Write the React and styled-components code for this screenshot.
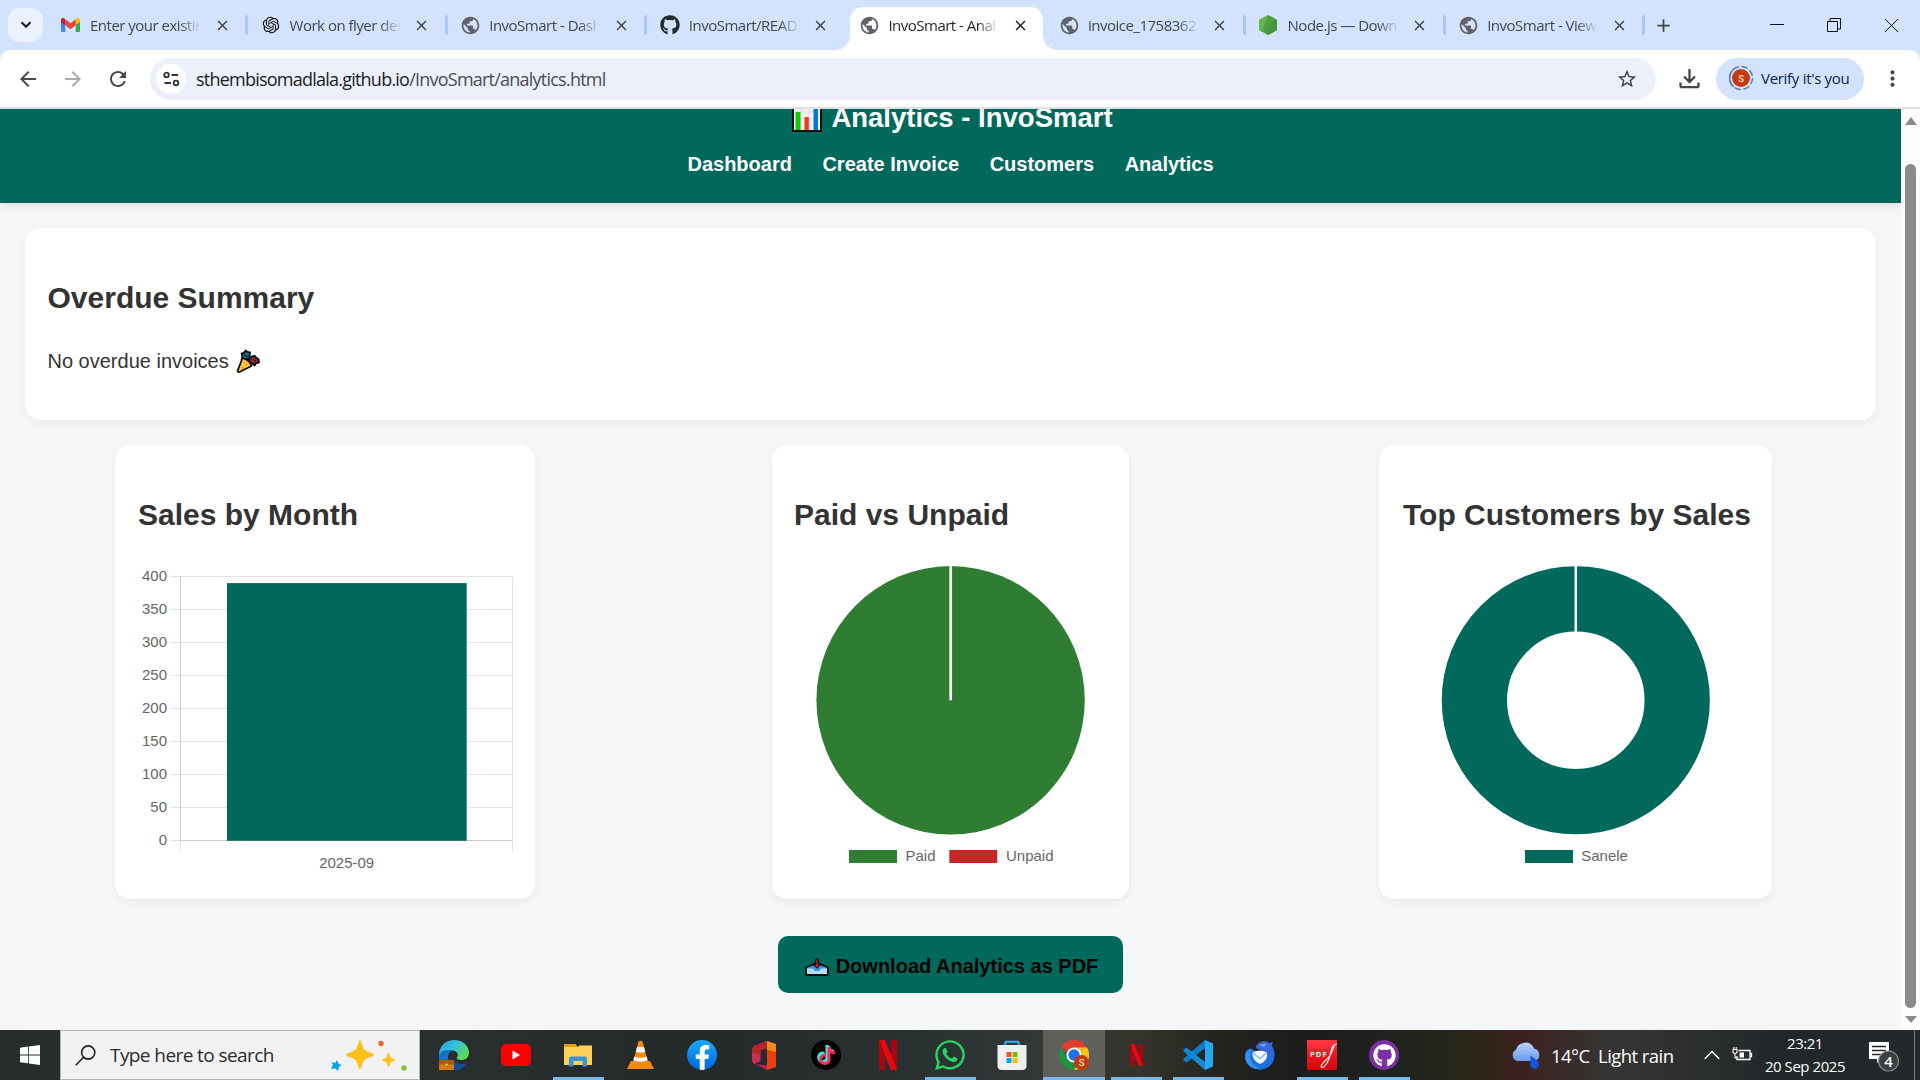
import React from "react";
import styled, { createGlobalStyle, css } from "styled-components";
import { FaGithub, FaFacebookF, FaTiktok, FaWhatsapp } from "react-icons/fa";
import { RiOpenaiFill } from "react-icons/ri";
import {
  MdPublic,
  MdClose,
  MdArrowBack,
  MdArrowForward,
  MdRefresh,
  MdStarOutline,
  MdMoreVert,
  MdAdd,
} from "react-icons/md";

const TEAL = "#00695c";

const GlobalStyle = createGlobalStyle`
  * { box-sizing: border-box; }
  body { margin: 0; overflow: hidden; background: #f4f6f8; }
  svg { display: block; flex: none; }
`;

const Screen = styled.div`
  width: 1920px;
  height: 1080px;
  display: flex;
  flex-direction: column;
  overflow: hidden;
  font-family: "Open Sans", "Noto Sans", sans-serif;
`;

/* ---------- Browser tab strip ---------- */

const TabStrip = styled.div`
  height: 50px;
  display: flex;
  background: #d3e2fd;
  flex: none;
`;

const TabSearch = styled.div`
  width: 35px;
  height: 34px;
  margin: 8px 0 0 8px;
  border-radius: 12px;
  background: #ebf1fd;
  display: grid;
  place-items: center;
`;

const Tabs = styled.div`
  display: flex;
  margin-left: 7px;
`;

const Tab = styled.div`
  position: relative;
  width: 199.6px;
  height: 50px;
  padding-left: 11px;
  display: flex;
  align-items: center;
  color: ${(p) => (p.$active ? "#1f2124" : "#43474d")};
  & > * {
    flex: none;
  }
  ${(p) =>
    p.$active &&
    css`
      &::before {
        content: "";
        position: absolute;
        left: 1.6px;
        top: 7px;
        width: 193px;
        height: 43px;
        background: #fff;
        border-radius: 13px 13px 0 0;
      }
      &::after {
        content: "";
        position: absolute;
        left: -12.4px;
        bottom: 0;
        width: 221px;
        height: 14px;
        background: radial-gradient(circle at 0 0, transparent 13.5px, #fff 14px) 0 0 / 14px 14px no-repeat,
          radial-gradient(circle at 14px 0, transparent 13.5px, #fff 14px) 100% 0 / 14px 14px no-repeat;
      }
    `}
`;

const TabIcon = styled.span`
  position: relative;
  z-index: 1;
  width: 18px;
  height: 20px;
  display: grid;
  place-items: center;
  color: ${(p) => p.$color || "#5f6368"};
`;

const TabTitle = styled.span`
  position: relative;
  z-index: 1;
  width: 112px;
  margin-left: 11px;
  font-size: 15px;
  letter-spacing: -0.5px;
  line-height: 22px;
  white-space: nowrap;
  mask-image: linear-gradient(90deg, #000 80%, transparent 99%);
`;

const TabClose = styled.span`
  position: relative;
  z-index: 1;
  margin-left: 11px;
  width: 18px;
  display: grid;
  place-items: center;
  color: ${(p) => (p.$active ? "#1b1c1e" : "#404347")};
`;

const TabDivider = styled.span`
  width: 3px;
  height: 20px;
  margin-left: 14px;
  border-radius: 2px;
  background: #a8c7fa;
  visibility: ${(p) => (p.$hidden ? "hidden" : "visible")};
`;

const NewTab = styled.div`
  width: 30px;
  margin-left: 2px;
  display: grid;
  place-items: center;
  color: #3c4043;
`;

const WindowButtons = styled.div`
  margin-left: auto;
  padding-right: 21px;
  display: flex;
  align-items: center;
  gap: 43px;
`;

/* ---------- Browser toolbar ---------- */

const ToolbarBack = styled.div`
  background: #d3e2fd;
  flex: none;
`;

const Toolbar = styled.div`
  height: 59px;
  display: flex;
  align-items: center;
  background: #fff;
  border-bottom: 2px solid #dfe2e1;
  border-radius: 10px 10px 0 0;
  padding: 0 15px 0 15px;
`;

const NavButtons = styled.div`
  width: 135px;
  display: flex;
  gap: 21px;
  padding-left: 0.5px;
  color: #46494d;
`;

const NavButton = styled.span`
  display: flex;
  opacity: ${(p) => (p.$disabled ? 0.45 : 1)};
`;

const Omnibox = styled.div`
  width: 1506px;
  height: 42px;
  border-radius: 21px;
  background: #ebf0fa;
  display: flex;
  align-items: center;
  padding: 0 18px 0 6px;
`;

const SiteInfo = styled.span`
  width: 30px;
  height: 30px;
  border-radius: 50%;
  background: #fff;
  display: grid;
  place-items: center;
`;

const Url = styled.span`
  margin-left: 10px;
  font-size: 18px;
  letter-spacing: -0.77px;
  color: #4a4d51;
  white-space: nowrap;
  b {
    font-weight: 400;
    color: #1b1c1e;
  }
`;

const StarSlot = styled.span`
  margin-left: auto;
  color: #3f4246;
`;

const DownloadSlot = styled.span`
  margin-left: 23px;
`;

const ProfileChip = styled.div`
  width: 148px;
  height: 42px;
  margin-left: 16px;
  border-radius: 21px;
  background: #d3e2fd;
  display: flex;
  align-items: center;
  padding-left: 12px;
  padding-bottom: 1px;
  gap: 7px;
  font-size: 15px;
  letter-spacing: -0.3px;
  color: #0a2351;
  white-space: nowrap;
`;

const MenuSlot = styled.span`
  margin-left: 16px;
  color: #43464a;
`;

/* ---------- Page ---------- */

const Viewport = styled.div`
  height: 921px;
  display: flex;
  flex: none;
  overflow: hidden;
`;

const Page = styled.div`
  width: 1901px;
  height: 921px;
  background: #f4f6f8;
  color: #333;
  font-family: "Liberation Sans", Arial, sans-serif;
  overflow: hidden;
`;

const Header = styled.header`
  height: 94px;
  background: ${TEAL};
  color: #fff;
  display: flex;
  flex-direction: column;
  align-items: center;
  box-shadow: 0 2px 8px rgba(0, 0, 0, 0.1);
`;

const PageTitle = styled.h1`
  margin: -7px 0 18px;
  padding-left: 4px;
  height: 32px;
  line-height: 32px;
  font-size: 27.5px;
  display: flex;
  align-items: center;
  gap: 9px;
  white-space: nowrap;
`;

const PageNav = styled.nav`
  display: flex;
  gap: 30.5px;
  font-size: 20px;
  line-height: 24px;
  font-weight: 700;
  white-space: nowrap;
`;

const Main = styled.main`
  padding: 25px;
`;

const Card = styled.section`
  width: ${(p) => p.$width}px;
  height: ${(p) => p.$height}px;
  padding: 22px 0 0 ${(p) => p.$inset || 22}px;
  background: #fff;
  border-radius: 15px;
  box-shadow: 0 3px 8px rgba(0, 0, 0, 0.05);
`;

const CardTitle = styled.h2`
  margin: 25px 0;
  font-size: 30px;
  line-height: 45px;
  white-space: nowrap;
`;

const Note = styled.p`
  margin: 26px 0 0;
  font-size: 20px;
  line-height: 30px;
  display: flex;
  align-items: center;
  gap: 7px;
`;

const Charts = styled.div`
  margin-top: 25px;
  display: grid;
  grid-template-columns: 600px 601px 599px;
  gap: 25px;
  justify-items: center;
`;

const Actions = styled.div`
  margin-top: 37px;
  display: flex;
  justify-content: center;
`;

const DownloadButton = styled.button`
  width: 345px;
  height: 57px;
  border: 0;
  border-radius: 10px;
  background: ${TEAL};
  color: #000;
  font: 700 20px "Liberation Sans", Arial, sans-serif;
  display: flex;
  align-items: center;
  justify-content: center;
  gap: 7px;
  padding: 3px 0 0 2px;
  white-space: nowrap;
  svg {
    margin-top: 2px;
  }
`;

const Scrollbar = styled.div`
  width: 19px;
  background: #fcfcfc;
  display: flex;
  flex-direction: column;
  align-items: center;
  padding: 8px 0 7px;
`;

const Thumb = styled.div`
  width: 11px;
  height: 844px;
  margin: 39px 0 8px;
  border-radius: 6px;
  background: #8b8b8b;
`;

const Caret = styled.span`
  border: 6.5px solid transparent;
  ${(p) =>
    p.$up
      ? "border-bottom: 8px solid #8b8b8b; border-top: 0;"
      : "border-top: 7px solid #8b8b8b; border-bottom: 0;"}
`;

/* ---------- Taskbar ---------- */

const Taskbar = styled.div`
  height: 50px;
  flex: none;
  display: flex;
  color: #fff;
  background: linear-gradient(
    90deg,
    #272c2d 0,
    #292e2f 440px,
    #24292a 700px,
    #2c3333 960px,
    #333735 1040px,
    #34342c 1140px,
    #24231e 1220px,
    #1b1d1d 1300px,
    #20231e 1400px,
    #272619 1460px,
    #3b211d 1520px,
    #392a28 1560px,
    #353534 1610px,
    #2d302f 1680px,
    #22272a 1780px,
    #23282a 1920px
  );
`;

const Start = styled.div`
  width: 60px;
  display: grid;
  place-items: center;
`;

const SearchBox = styled.div`
  width: 360px;
  height: 50px;
  background: #f2f2f2;
  border: 1px solid #b4b4b4;
  display: flex;
  align-items: center;
  padding-left: 14px;
  color: #2b2b2b;
  font-size: 19px;
  letter-spacing: -0.58px;
  white-space: nowrap;
`;

const SearchText = styled.span`
  width: 220px;
  margin-left: 14px;
`;

const AppList = styled.div`
  display: flex;
  margin-left: 3px;
`;

const AppSlot = styled.div`
  width: 62px;
  height: 50px;
  display: grid;
  place-items: center;
  background: linear-gradient(#76b9ed, #76b9ed) center bottom / ${(p) => (p.$open ? (p.$focused ? 62 : 51) : 0)}px 3px
    no-repeat ${(p) => (p.$focused ? "#5f605a" : "transparent")};
`;

const Disc = styled.span`
  width: 30px;
  height: 30px;
  border-radius: 50%;
  overflow: hidden;
  display: grid;
  place-items: ${(p) => p.$place || "center"};
  background: ${(p) => p.$bg};
  color: #fff;
`;

const Layered = styled.span`
  display: grid;
  & > * {
    grid-area: 1 / 1;
  }
  & > :nth-child(1) {
    color: #25f4ee;
    transform: translate(-1px, -1px);
  }
  & > :nth-child(2) {
    color: #fe2c55;
    transform: translate(1px, 1px);
  }
`;

const Weather = styled.div`
  margin-left: 96px;
  width: 166px;
  display: flex;
  align-items: center;
  gap: 10px;
  font-size: 18.5px;
  letter-spacing: -0.55px;
  white-space: pre;
`;

const Tray = styled.div`
  margin-left: 27px;
  display: flex;
  align-items: center;
  gap: 12px;
`;

const Clock = styled.div`
  width: 94px;
  margin-left: 5px;
  text-align: center;
  font-size: 15px;
  line-height: 23px;
  letter-spacing: -0.45px;
  padding-top: 2px;
  white-space: nowrap;
`;

const Notifications = styled.div`
  margin-left: 15px;
  display: flex;
  align-items: center;
`;

const DesktopEdge = styled.div`
  width: 1px;
  margin-left: auto;
  margin-right: 5px;
  background: #7b7e80;
`;

/* ---------- Icons ---------- */

const GmailIcon = () => (
  <svg width="19" height="14" viewBox="0 0 19 14">
    <path d="M0 2v10.500Q0 14 1.500 14H4.300V5z" fill="#4285f4" />
    <path d="M19 2v10.500Q19 14 17.500 14H14.700V5z" fill="#34a853" />
    <path d="M14.700 1.200 16.200.3C17.600-.5 19 .5 19 2v2L14.700 7.200z" fill="#fbbc04" />
    <path d="M4.300 1.200 2.800.3C1.400-.5 0 .5 0 2v2l4.300 3.200z" fill="#c5221f" />
    <path d="M4.300 1.200 9.500 5.200l5.200-4v6L9.500 11.200 4.300 7.200z" fill="#ea4335" />
  </svg>
);

const NodeIcon = () => (
  <svg width="18" height="20" viewBox="0 0 18 20">
    <path d="M9 0l9 5v10l-9 5-9-5V5z" fill="#539e43" />
    <path d="M9 0l9 5v10L9 20 6 18 15 4z" fill="#459639" />
    <path d="M9 0 3 17 0 15V5z" fill="#66b64f" />
  </svg>
);

const TuneIcon = () => (
  <svg width="17" height="16" viewBox="0 0 17 16" fill="none" stroke="#303338" strokeWidth="1.800">
    <circle cx="3.500" cy="4" r="2.300" />
    <path d="M8.500 4H15M1.500 12H8" />
    <circle cx="13" cy="12" r="2.300" />
  </svg>
);

const ReloadIcon = () => <MdRefresh size={24} />;

const DownloadIcon = () => (
  <svg width="21" height="21" viewBox="0 0 21 21" fill="none" stroke="#45484c" strokeWidth="2.300">
    <path d="M10.500 1v12M5 8.500l5.500 5.500L16 8.500M1.500 14.500v3.200q0 1.500 1.500 1.500h15q1.500 0 1.500-1.500v-3.200" />
  </svg>
);

const AvatarIcon = () => (
  <svg width="26" height="26" viewBox="0 0 26 26">
    <circle cx="13" cy="13" r="11.500" fill="none" stroke="#5a7eb0" strokeWidth="1.500" strokeDasharray="6.500 2.530" />
    <path d="M6 4A11.500 11.500 0 0 0 6 22" fill="none" stroke="#5a7eb0" strokeWidth="1.500" />
    <circle cx="13" cy="13" r="9" fill="#c5390d" />
    <text x="13" y="16.500" fontSize="9.500" fill="#fff" textAnchor="middle" fontFamily="Roboto, sans-serif">
      S
    </text>
  </svg>
);

const BarsEmoji = () => (
  <svg width="30" height="28" viewBox="0 0 30 28">
    <rect x="1" y="1" width="28" height="26" fill="#f2f2f2" stroke="#111" strokeWidth="2" />
    <path d="M2 8h26M2 14.500h26M2 21h26M9 2v24M17 2v24" stroke="#dcdcdc" strokeWidth=".800" />
    <path d="M3.500 8h5v18h-5z" fill="#16c60c" />
    <path d="M12.500 13h4.300v13h-4.300z" fill="#f03a17" />
    <path d="M21.500 3.500h4.500V26h-4.500z" fill="#0078d7" />
  </svg>
);

const PartyEmoji = () => (
  <svg width="24" height="24" viewBox="0 0 24 24" stroke="#0c0c0c" strokeWidth="1.800" strokeLinejoin="round">
    <path d="M5.500 4.500 8 4l1.500-2.500L11.500 3l2.500.5-.5 5 .5 2-4-.5-4.500.5 1-3z" fill="#187a9b" />
    <path d="M13.500 10l2.500-2.500 3-.5 1.500 2 2 1 .5 3.500-3 .5-1.500 2.500-2-2-3-.5z" fill="#a5301d" />
    <path d="M11 7.500q3.500 0 4 4M8 6l3 1.500M18 10l1.500 2.500" fill="none" stroke="#22204a" />
    <path d="M6.500 9 1.500 22Q2 23.500 3.500 23L15.500 17Q14 11.500 6.500 9z" fill="#ffc83d" />
    <path d="M6 18.500l1.500.8M10 15.500l1 .5M8 13l.8.300" stroke="#d65a2b" strokeWidth="1.300" />
  </svg>
);

const InboxEmoji = () => (
  <svg width="24" height="18" viewBox="0 0 24 18" strokeLinejoin="round">
    <path d="M1 10.500Q1 9 3 8.500L8 6.500h8l5 2q2 .5 2 2V16q0 1-1 1H2q-1 0-1-1z" fill="#3a96dd" stroke="#0c0c0c" strokeWidth="1.800" />
    <path d="M2 10.500h5.500q1.500 2.700 4.500 2.700t4.500-2.700H22V16H2z" fill="#b9dcf6" />
    <path d="M10.500 1h3v5h2.700L12 10.300 7.800 6h2.700z" fill="#0c0c0c" stroke="#0c0c0c" strokeWidth="1" />
    <path d="M11.400 1.500h1.200v5.300h1.600L12 9.300 9.800 6.800h1.600z" fill="#f0202e" />
  </svg>
);

const StartIcon = () => (
  <svg width="20" height="20" viewBox="0 0 20 20" fill="#fff">
    <path d="M0 2.700 8 1.600v7.900H0zM8.800 1.500 20 0v9.500H8.800zM0 10.400h8v7.900L0 17.200zM8.800 10.400H20V20L8.800 18.400z" />
  </svg>
);

const SearchIcon = () => (
  <svg width="21" height="21" viewBox="0 0 21 21" fill="none" stroke="#1f1f1f" strokeWidth="1.600">
    <circle cx="13.200" cy="7.500" r="6.600" />
    <path d="M8.600 12.200.7 20.200" />
  </svg>
);

const SparklesIcon = () => (
  <svg width="78" height="36" viewBox="0 0 78 36">
    <path d="M30 3c1.500 0 2.600 7.500 4.500 9.800S44 16 44 18s-7.300 2.500-9.500 5S31.500 32 30 32s-2.300-6.500-4.500-9S16 20 16 18s7.300-2.700 9.500-5.200S28.500 3 30 3z" fill="#fcc21b" />
    <path d="M58.500 15.500c1 0 1.400 4.300 2.400 5.200s4.300 1.200 4.300 2.100-3.400 1.400-4.300 2.300-1.400 4.600-2.400 4.600-1.400-3.700-2.400-4.600-4.300-1.400-4.300-2.300 3.400-1.200 4.300-2.100 1.400-5.200 2.400-5.200z" fill="#fcc21b" />
    <path d="M6.800 23l2 4 3 1-3 2-.5 4.200-3-2.700-4.300.3 2-4L1.500 25l4 1z" fill="#00a4ef" />
    <circle cx="51" cy="6.500" r="2.700" fill="#f1662f" />
    <circle cx="74" cy="31" r="2.700" fill="#82c341" />
  </svg>
);

const EdgeIcon = () => (
  <svg width="30" height="30" viewBox="0 0 30 30">
    <defs>
      <linearGradient id="edgeTop" x1="0" y1="0" x2="1" y2=".6">
        <stop offset="0" stopColor="#1fa2e8" />
        <stop offset=".5" stopColor="#34c1dd" />
        <stop offset="1" stopColor="#5fdc4c" />
      </linearGradient>
    </defs>
    <path d="M0 14C1 5 7 0 15 0c9 0 15 6 15 12.500 0 5-3.500 7.500-7.500 7.500-3.500 0-5.500-1-4.500-2.500 2-3 0-7-4.500-7C7 10.500 0 13 0 21z" fill="url(#edgeTop)" />
    <path d="M0 15c2-4 7-6 13.500-4.500C9 12 8 17 10 21.500s8 6.500 17 2C24 28 20 30 15 30 6 30 0 24 0 15z" fill="#1273c4" />
    <path d="M15 20c2 4 7 5 12 3.500C24 28 20 30 15 30z" fill="#0d4f9c" />
    <rect x="0" y="20" width="15" height="10" fill="#d27a14" />
    <path d="M0 20h15v4.500H0z" fill="#a95d0a" />
    <circle cx="7.500" cy="24.500" r="1.100" fill="#ffd56b" />
  </svg>
);

const YoutubeIcon = () => (
  <svg width="30" height="22" viewBox="0 0 30 22">
    <rect width="30" height="22" rx="5" fill="#f00" />
    <path d="M11.500 6.500v9l7.500-4.500z" fill="#fff" />
  </svg>
);

const ExplorerIcon = () => (
  <svg width="28" height="24" viewBox="0 0 28 24">
    <path d="M0 1h11.500l2 2.500V6H0z" fill="#e3a008" />
    <path d="M0 4h14l1-1.500h13V22H0z" fill="#ffd257" />
    <path d="M5 23.500v-8q0-2 2-2h14q2 0 2 2v8h-4.500V18h-9v5.500z" fill="#3d92d8" />
  </svg>
);

const VlcIcon = () => (
  <svg width="27" height="30" viewBox="0 0 27 30">
    <path d="M4 21h19l4 8H0z" fill="#f28b0c" />
    <path d="M11.500 1.500q2-1.500 4 0L21 22.500q-7.500 4-15 0z" fill="#f58a07" />
    <path d="M10 7h7l1.300 4.800q-4.800 2-9.600 0zM7.300 16.500q6.200 2.700 12.400 0l1 3.700q-7.200 3.200-14.400 0z" fill="#f4f4f4" />
  </svg>
);

const OfficeIcon = () => (
  <svg width="24" height="29" viewBox="0 0 24 29">
    <path d="M15 0 24 3v23l-9 3z" fill="#ea3e0b" />
    <path d="M15 0 24 3v8l-9-2z" fill="#f08a1d" />
    <path d="M15 0v7L8.500 9.500V20L2.500 23Q0 22 0 19V9Q0 6 3 4.500z" fill="#c8305a" />
    <path d="M15 0v7L8.500 9.500v4L0 12V9Q0 6 3 4.500z" fill="#b3242a" />
    <path d="M3 23l12 1.500V29z" fill="#c2205b" />
  </svg>
);

const NetflixIcon = ({ width, height }) => (
  <svg width={width} height={height} viewBox="0 0 18 30" preserveAspectRatio="none">
    <path d="M0 0h6v30H0zM12 0h6v30h-6z" fill="#a9060f" />
    <path d="M0 0h6l12 30h-6z" fill="#e50914" />
  </svg>
);

const StoreIcon = () => (
  <svg width="30" height="30" viewBox="0 0 30 30">
    <path d="M8.300 6V3q0-1.300 1.300-1.300h10.800Q21.700 1.700 21.700 3v3" fill="none" stroke="#2fb4ef" strokeWidth="2" />
    <path d="M.5 5h29v20.500q0 4.500-4.500 4.500H5Q.5 30 .5 25.500z" fill="#f0f0f0" />
    <path d="M9.500 12h5v5h-5z" fill="#f25022" />
    <path d="M15.500 12h5v5h-5z" fill="#7fba00" />
    <path d="M9.500 18h5v5h-5z" fill="#00a4ef" />
    <path d="M15.500 18h5v5h-5z" fill="#ffb900" />
  </svg>
);

const ChromeIcon = () => (
  <svg width="30" height="30" viewBox="0 0 30 30">
    <path d="M15 15 2 7.500A15 15 0 0 1 28 7.500z" fill="#e33b2e" />
    <path d="M15 7.500h13A15 15 0 0 1 15 30l6.500-11.250z" fill="#fbc116" />
    <path d="M2 7.500A15 15 0 0 0 15 30l6.500-11.250H8.500z" fill="#229342" />
    <circle cx="15" cy="15" r="7.500" fill="#fff" />
    <circle cx="15" cy="15" r="5.700" fill="#1a73e8" />
    <circle cx="22.500" cy="22.500" r="7.500" fill="#c5390d" />
    <text x="22.500" y="26" fontSize="9.500" fill="#fff" textAnchor="middle" fontFamily="Roboto, sans-serif">
      S
    </text>
  </svg>
);

const VsCodeIcon = () => (
  <svg width="30" height="30" viewBox="0 0 30 30">
    <path d="M22 0 30 3.500v23L22 30z" fill="#24a8f2" />
    <path d="M22 0v8L3.500 22.500.5 20.500v-1.800z" fill="#0e7dc9" />
    <path d="M22 30v-8L3.500 7.500.5 9.500v1.800z" fill="#1289d8" />
  </svg>
);

const ThunderbirdIcon = () => (
  <svg width="30" height="30" viewBox="0 0 30 30">
    <path d="M1 12Q2.500 8.500 5.500 8.500L13 12l9-1 5.500-4Q30 10 29.300 17C28.500 25 22 29.500 15 29.500S0 24 0 17q0-3 1-5z" fill="#1d6fe0" />
    <path d="M10.500 8Q12 2.500 18 1.300q4-.5 6.500 1.700l3.500-1-1 3.500q2 6-1 12.500Q23 12 10.500 8z" fill="#3b63da" />
    <path d="M14 5.500q4-3 8-1.500-2 1-2.500 3z" fill="#6f9cf0" />
    <path d="M.8 12.500q3-3.500 6.700-3-3.500 4-2 9.500 2.500 7.500 10 10.300Q3 29.500.3 19z" fill="#2f93f5" />
    <path d="M7.500 12.500q7-4 14.500 0 1.500 8-7 11.500-8.500-3.500-7.500-11.500z" fill="#eef6fe" />
    <path d="M8 13l6.800 5.500 6.700-5.500" fill="none" stroke="#8ab9f0" strokeWidth="1.500" />
  </svg>
);

const PdfIcon = () => (
  <svg width="30" height="30" viewBox="0 0 30 30">
    <defs>
      <linearGradient id="pdfRed" x2="0" y2="1">
        <stop offset="0" stopColor="#ff3b45" />
        <stop offset=".5" stopColor="#f0151d" />
        <stop offset="1" stopColor="#cf050b" />
      </linearGradient>
    </defs>
    <rect width="30" height="30" fill="url(#pdfRed)" />
    <text x="3" y="17" fontSize="7.500" fontWeight="700" fill="#fff" fontFamily="Open Sans, sans-serif" textLength="16.500">
      PDF
    </text>
    <path d="M29.500 4.500Q25.500 4 24 11q-1 7-4 12-3 5-5.500 4.500-1.500-2 4-7Q25 15 27 6" fill="none" stroke="#fff" strokeWidth="1.100" />
  </svg>
);

const RainIcon = () => (
  <svg width="30" height="27" viewBox="0 0 30 27">
    <defs>
      <linearGradient id="cloud" x2="0" y2="1">
        <stop offset="0" stopColor="#b9d2fb" />
        <stop offset="1" stopColor="#6c9bea" />
      </linearGradient>
    </defs>
    <path d="M6.500 19A6 6 0 0 1 5 7.800 9.500 9.500 0 0 1 23 6.500 6.500 6.500 0 0 1 24 19z" fill="url(#cloud)" />
    <path d="M19.500 13.500q8.500 6 8.500 9A4.300 4.300 0 0 1 19.300 22.500z" fill="#1553e0" />
  </svg>
);

const BatteryIcon = () => (
  <svg width="21" height="16" viewBox="0 0 21 16">
    <path d="M6.500 3.500H18v9H5V9M18 6.500h1.500v3H18" fill="none" stroke="#fff" strokeWidth="1.300" />
    <path d="M7.500 5.500H12v5H7.500z" fill="#fff" />
    <path d="M1 2.500h4v3L3 7 1 5.500zM1.800 0v2.500M4.200 0v2.500M3 7v4h2" fill="none" stroke="#fff" strokeWidth="1.100" />
  </svg>
);

const ActionCenterIcon = () => (
  <svg width="34" height="34" viewBox="0 0 34 34">
    <path d="M2 4h20v17h-8l-4 4v-4H2z" fill="#fff" />
    <path d="M5 8.500h14M5 12.500h14M5 16.500h9" stroke="#23282a" strokeWidth="1.300" />
    <circle cx="21.500" cy="23" r="10" fill="#3a3e40" stroke="#8d9092" strokeWidth="1.200" />
    <text x="21.500" y="28.500" fontSize="15" fontWeight="600" fill="#fff" textAnchor="middle" fontFamily="Open Sans, sans-serif">
      4
    </text>
  </svg>
);

/* ---------- Charts ---------- */

const ChartText = styled.text`
  font: 15px "Liberation Sans", Arial, sans-serif;
  fill: #666;
`;

const SalesChart = () => {
  const left = 42.5;
  const right = 374.5;
  const top = 14.5;
  const step = 33;
  const bottom = top + step * 8;
  const sales = 390;
  const barTop = bottom - (sales / 50) * step;
  return (
    <svg width="376" height="314" viewBox="0 0 376 314">
      {[400, 350, 300, 250, 200, 150, 100, 50, 0].map((value, i) => (
        <g key={value}>
          <path d={`M32.500 ${top + i * step}H${right}`} stroke="#e3e3e3" />
          <ChartText x="29" y={top + i * step + 4.700} textAnchor="end">
            {value}
          </ChartText>
        </g>
      ))}
      <path d={`M${left} ${bottom}v10.500M${right} ${top}V${bottom + 10.500}`} stroke="#e3e3e3" />
      <path d={`M${left} ${top}V${bottom}H${right}`} fill="none" stroke="#cbcbcb" />
      <rect x="89" y={barTop} width="239.700" height={bottom - barTop + 0.3} fill={TEAL} />
      <ChartText x="208.700" y={bottom + 27.500} textAnchor="middle">
        2025-09
      </ChartText>
    </svg>
  );
};

const PaidChart = () => (
  <svg width="312" height="314" viewBox="0 0 312 314">
    <circle cx="156.600" cy="138.300" r="134.200" fill="#2e7d32" />
    <path d="M156.700 3v135.300" stroke="#fff" strokeWidth="2.700" />
    <rect x="55" y="288" width="48" height="13" fill="#2e7d32" />
    <ChartText x="111.500" y="299">
      Paid
    </ChartText>
    <rect x="155.300" y="288" width="48" height="13" fill="#c62828" />
    <ChartText x="212" y="299">
      Unpaid
    </ChartText>
  </svg>
);

const CustomersChart = () => (
  <svg width="348" height="314" viewBox="0 0 348 314">
    <circle cx="172.800" cy="138.300" r="101.400" fill="none" stroke={TEAL} strokeWidth="65.300" />
    <path d="M172.800 3v67" stroke="#fff" strokeWidth="2.500" />
    <rect x="122" y="288" width="48" height="13" fill={TEAL} />
    <ChartText x="178.200" y="299">
      Sanele
    </ChartText>
  </svg>
);

/* ---------- Data ---------- */

const globe = <MdPublic size={21} />;

const tabs = [
  { title: "Enter your existin", icon: <GmailIcon /> },
  { title: "Work on flyer des", icon: <RiOpenaiFill size={20} />, color: "#111" },
  { title: "InvoSmart - Dash", icon: globe },
  { title: "InvoSmart/READ", icon: <FaGithub size={20} />, color: "#24292f", noDivider: true },
  { title: "InvoSmart - Anal", icon: globe, active: true, noDivider: true },
  { title: "invoice_1758362", icon: globe },
  { title: "Node.js — Down", icon: <NodeIcon /> },
  { title: "InvoSmart - View", icon: globe },
];

const apps = [
  { icon: <EdgeIcon /> },
  { icon: <YoutubeIcon /> },
  { icon: <ExplorerIcon />, open: true },
  { icon: <VlcIcon /> },
  {
    icon: (
      <Disc $bg="linear-gradient(#18acfe, #0163e0)" $place="end center">
        <FaFacebookF size={25} />
      </Disc>
    ),
  },
  { icon: <OfficeIcon /> },
  {
    icon: (
      <Disc $bg="#000">
        <Layered>
          <FaTiktok size={18} />
          <FaTiktok size={18} />
          <FaTiktok size={18} />
        </Layered>
      </Disc>
    ),
  },
  { icon: <NetflixIcon width={18} height={30} /> },
  { icon: <FaWhatsapp size={34} color="#25d366" />, open: true },
  { icon: <StoreIcon /> },
  { icon: <ChromeIcon />, open: true, focused: true },
  { icon: <NetflixIcon width={13} height={22} />, open: true },
  { icon: <VsCodeIcon />, open: true },
  { icon: <ThunderbirdIcon /> },
  { icon: <PdfIcon />, open: true },
  {
    icon: (
      <Disc $bg="#7b2fa5">
        <FaGithub size={23} />
      </Disc>
    ),
    open: true,
  },
];

export default function App() {
  return (
    <Screen>
      <GlobalStyle />
      <TabStrip>
        <TabSearch>
          <svg width="12" height="8" viewBox="0 0 12 8" fill="none" stroke="#1f2124" strokeWidth="2.200">
            <path d="M1.500 1.200 6 5.700l4.500-4.500" />
          </svg>
        </TabSearch>
        <Tabs>
          {tabs.map((tab) => (
            <Tab key={tab.title} $active={tab.active}>
              <TabIcon $color={tab.color}>{tab.icon}</TabIcon>
              <TabTitle>{tab.title}</TabTitle>
              <TabClose $active={tab.active}>
                <MdClose size={17} />
              </TabClose>
              <TabDivider $hidden={tab.noDivider} />
            </Tab>
          ))}
        </Tabs>
        <NewTab>
          <MdAdd size={21} />
        </NewTab>
        <WindowButtons>
          <svg width="14" height="14" viewBox="0 0 14 14" stroke="#111">
            <path d="M0 6.500h14" />
          </svg>
          <svg width="14" height="14" viewBox="0 0 14 14" fill="none" stroke="#111">
            <path d="M.5 3.500h10v10H.5zM3 3.500V.5h10.500V11h-3" />
          </svg>
          <svg width="15" height="15" viewBox="0 0 15 15" stroke="#111">
            <path d="M1 1l13 13M14 1 1 14" />
          </svg>
        </WindowButtons>
      </TabStrip>

      <ToolbarBack>
        <Toolbar>
          <NavButtons>
            <NavButton>
              <MdArrowBack size={24} />
            </NavButton>
            <NavButton $disabled>
              <MdArrowForward size={24} />
            </NavButton>
            <NavButton>
              <ReloadIcon />
            </NavButton>
          </NavButtons>
          <Omnibox>
            <SiteInfo>
              <TuneIcon />
            </SiteInfo>
            <Url>
              <b>sthembisomadlala.github.io</b>/InvoSmart/analytics.html
            </Url>
            <StarSlot>
              <MdStarOutline size={22} />
            </StarSlot>
          </Omnibox>
          <DownloadSlot>
            <DownloadIcon />
          </DownloadSlot>
          <ProfileChip>
            <AvatarIcon />
            Verify it's you
          </ProfileChip>
          <MenuSlot>
            <MdMoreVert size={25} />
          </MenuSlot>
        </Toolbar>
      </ToolbarBack>

      <Viewport>
        <Page>
          <Header>
            <PageTitle>
              <BarsEmoji />
              Analytics - InvoSmart
            </PageTitle>
            <PageNav>
              <span>Dashboard</span>
              <span>Create Invoice</span>
              <span>Customers</span>
              <span>Analytics</span>
            </PageNav>
          </Header>
          <Main>
            <Card $width={1851} $height={192} $inset={22.5}>
              <CardTitle>Overdue Summary</CardTitle>
              <Note>
                No overdue invoices <PartyEmoji />
              </Note>
            </Card>
            <Charts>
              <Card $width={420} $height={454} $inset={23}>
                <CardTitle>Sales by Month</CardTitle>
                <SalesChart />
              </Card>
              <Card $width={357} $height={454}>
                <CardTitle>Paid vs Unpaid</CardTitle>
                <PaidChart />
              </Card>
              <Card $width={393} $height={454} $inset={24}>
                <CardTitle>Top Customers by Sales</CardTitle>
                <CustomersChart />
              </Card>
            </Charts>
            <Actions>
              <DownloadButton>
                <InboxEmoji />
                Download Analytics as PDF
              </DownloadButton>
            </Actions>
          </Main>
        </Page>
        <Scrollbar>
          <Caret $up />
          <Thumb />
          <Caret />
        </Scrollbar>
      </Viewport>

      <Taskbar>
        <Start>
          <StartIcon />
        </Start>
        <SearchBox>
          <SearchIcon />
          <SearchText>Type here to search</SearchText>
          <SparklesIcon />
        </SearchBox>
        <AppList>
          {apps.map((app, i) => (
            <AppSlot key={i} $open={app.open} $focused={app.focused}>
              {app.icon}
            </AppSlot>
          ))}
        </AppList>
        <Weather>
          <RainIcon />
          {"14°C  Light rain"}
        </Weather>
        <Tray>
          <svg width="16" height="10" viewBox="0 0 16 10" fill="none" stroke="#fff" strokeWidth="1.400">
            <path d="M.7 9 8 1.500 15.300 9" />
          </svg>
          <BatteryIcon />
        </Tray>
        <Clock>
          23:21
          <br />
          20 Sep 2025
        </Clock>
        <Notifications>
          <ActionCenterIcon />
        </Notifications>
        <DesktopEdge />
      </Taskbar>
    </Screen>
  );
}
